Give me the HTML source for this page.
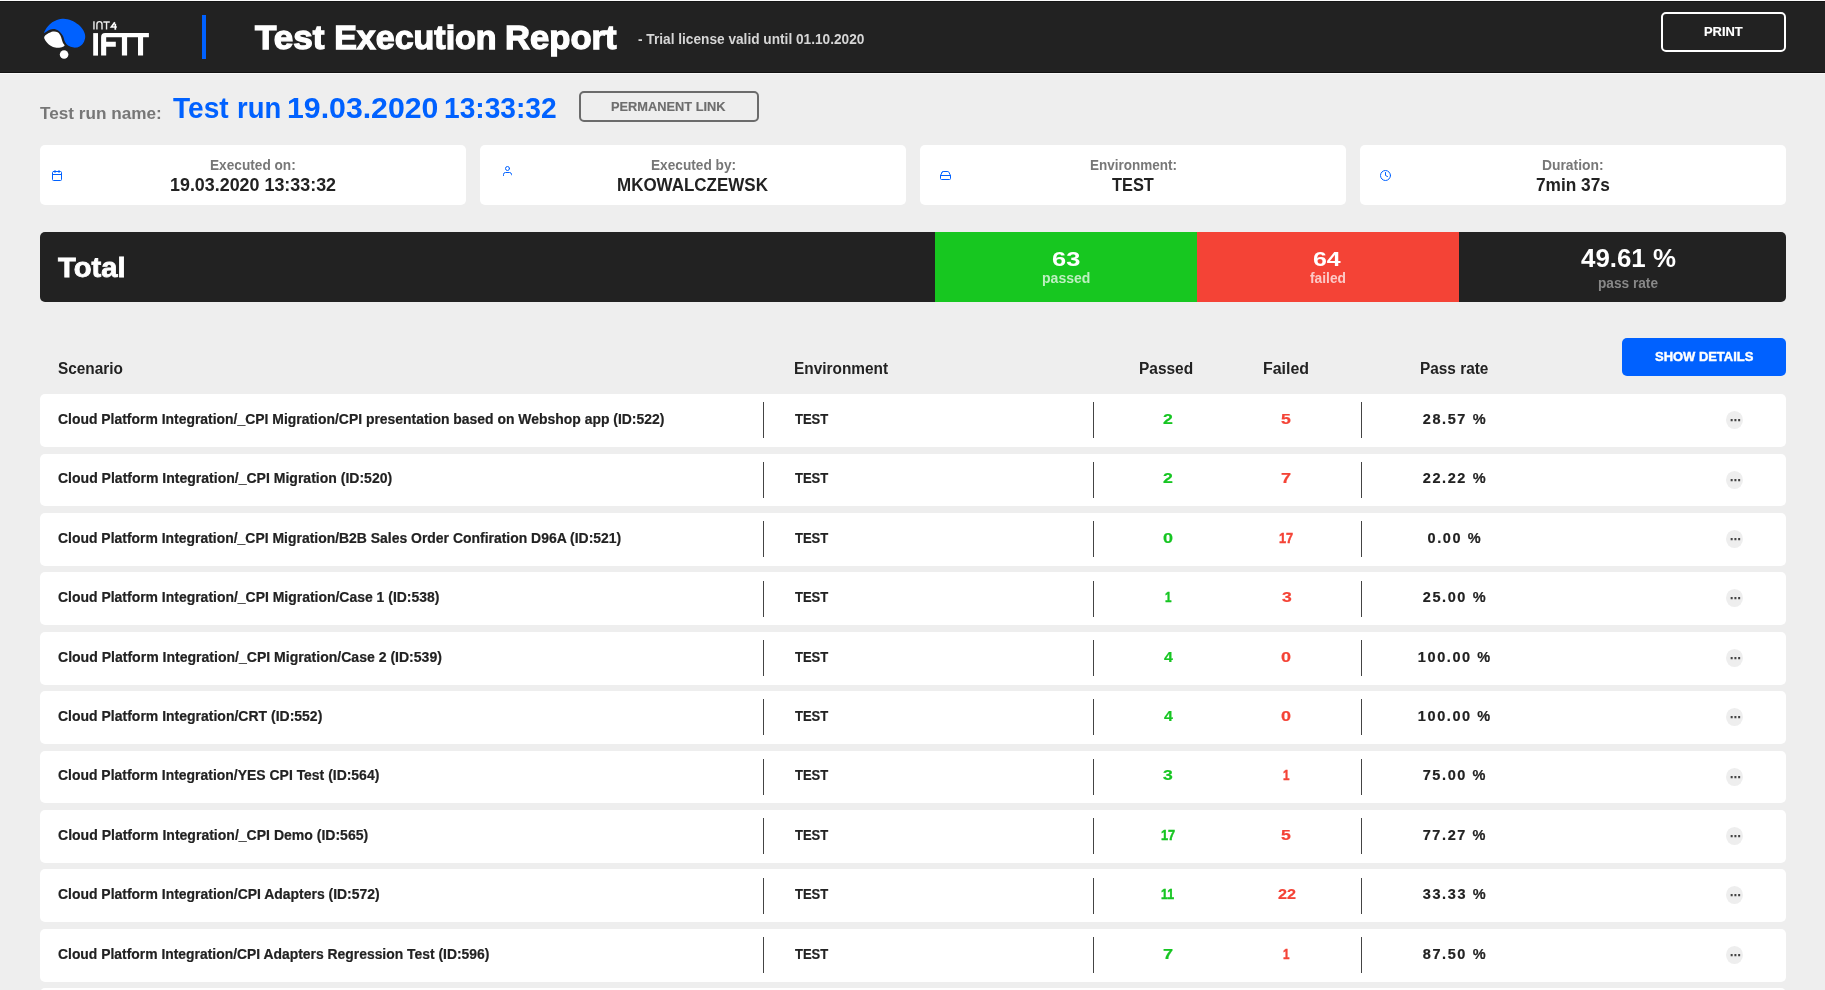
<!DOCTYPE html>
<html><head><meta charset="utf-8"><title>Test Execution Report</title>
<style>
html,body{margin:0;padding:0}
body{width:1825px;height:990px;overflow:hidden;background:#eeeeee;font-family:"Liberation Sans",sans-serif;position:relative}
.t{position:absolute;line-height:1;white-space:pre;transform-origin:0 0;display:block}
.hdr{position:absolute;left:0;top:1px;width:1825px;height:72px;background:#222222;border-top:1px solid #151515;border-bottom:1px solid #131313;box-sizing:border-box}
.bar{position:absolute;left:202px;top:15px;width:4px;height:44px;background:#0061ff}
.btn{position:absolute;box-sizing:border-box;border-radius:5px}
.card{position:absolute;top:145px;height:60px;width:426px;background:#fff;border-radius:5px}
.total{position:absolute;left:40px;top:232px;width:1746px;height:70px;background:#222222;border-radius:5px;overflow:hidden}
.row{position:absolute;left:40px;width:1746px;height:52.8px;background:#fff;border-radius:5px}
.dv{position:absolute;top:8.2px;width:1px;height:36px;background:#444}
.dots{position:absolute;left:1686px;top:17.1px;width:17.2px;height:18px;border-radius:50%;background:#eeeeee}
svg{position:absolute;overflow:visible}
.ic{fill:none;stroke:#0061ff;stroke-width:2;stroke-linecap:round;stroke-linejoin:round}
</style></head><body>
<div style="position:absolute;left:0;top:0;width:1825px;height:1px;background:#fcfcfc"></div><div class="hdr"></div><div style="position:absolute;left:0;top:73px;width:1825px;height:1px;background:#f9f9f9"></div>
<!-- logo -->
<svg style="left:30px;top:10px" width="140" height="60" viewBox="0 0 140 60">
<path d="M14.2 23.0C13.8 22.6 15.6 19.4 16.9 17.6C18.2 15.8 20.3 13.7 22.2 12.3C24.1 10.9 26.5 10.0 28.4 9.4C30.3 8.8 31.5 8.6 33.7 8.8C35.9 9.0 39.0 9.4 41.4 10.4C43.8 11.4 46.3 12.9 48.3 14.6C50.3 16.2 52.1 18.4 53.3 20.3C54.4 22.2 55.1 24.2 55.2 26.1C55.3 28.0 54.9 29.8 54.1 31.4C53.3 33.0 52.0 34.7 50.6 35.7C49.2 36.7 47.7 37.4 46.0 37.6C44.3 37.8 42.1 37.3 40.6 36.8C39.1 36.3 37.8 35.5 36.8 34.5C35.8 33.5 35.1 32.1 34.5 30.7C33.9 29.3 33.8 27.6 33.0 26.1C32.2 24.6 31.2 23.0 29.9 21.9C28.6 20.8 27.1 19.5 25.3 19.2C23.5 18.9 21.1 19.5 19.2 20.1C17.3 20.7 14.6 23.4 14.2 23.0Z" fill="#0061ff"/>
<path d="M14.2 27.2C14.4 25.9 16.1 24.8 17.6 23.8C19.1 22.9 21.3 21.8 23.0 21.5C24.7 21.2 26.4 21.6 27.6 22.2C28.8 22.8 29.6 24.1 30.3 25.3C31.0 26.5 31.4 28.2 31.8 29.5C32.2 30.8 32.5 32.0 33.0 33.0C33.5 34.0 34.9 35.0 34.5 35.7C34.1 36.4 32.2 37.1 30.7 37.4C29.2 37.7 27.1 38.0 25.3 37.6C23.5 37.2 21.4 36.3 19.9 35.3C18.4 34.3 17.1 32.8 16.1 31.4C15.2 30.0 13.9 28.5 14.2 27.2Z" fill="#fff"/>
<circle cx="34.1" cy="44.5" r="4.3" fill="#fff"/>
<g fill="#fff">
<rect x="63.2" y="23.1" width="4.8" height="22.5"/>
<path d="M71.1 45.6V27.1a4 4 0 0 1 4-4H118.9v4.2H113.1V45.6h-5.1V27.3H97.1V45.6h-5.2V27.3H76.2V31.8h9.6v4.9h-9.6V45.6z"/>
</g>
<g fill="none" stroke="#eee" stroke-width="1.4">
<path d="M63.95 11.3V19.6"/>
<path d="M66.9 19.6V14.2a2.55 2.55 0 0 1 5.1 0V19.6"/>
<path d="M73.3 12H79.8M76.55 12V19.6"/>
</g>
<path d="M84.8 12.3L81.4 17H86.8M85.3 13.8V19.7" fill="none" stroke="#fff" stroke-width="1.7"/>
</svg>
<div class="bar"></div>
<div class="btn" style="left:1661px;top:12px;width:125px;height:40px;border:2px solid #fff"></div>
<div class="btn" style="left:579px;top:91px;width:180px;height:31px;border:2px solid #6b6b6b"></div>
<div class="card" style="left:40px"></div>
<div class="card" style="left:480px"></div>
<div class="card" style="left:920px"></div>
<div class="card" style="left:1360px"></div>
<!-- icons -->
<svg class="ic" style="left:51px;top:169px" width="14" height="14" viewBox="0 0 14 14"><g transform="translate(0,0.5) scale(0.5)"><rect x="3" y="4" width="18" height="18" rx="2" ry="2"/><line x1="16" y1="2" x2="16" y2="6"/><line x1="8" y1="2" x2="8" y2="6"/><line x1="3" y1="10" x2="21" y2="10"/></g></svg>
<svg class="ic" style="left:501px;top:165px" width="14" height="14" viewBox="0 0 14 14"><g transform="translate(0.5,0) scale(0.5)"><path d="M20 19.6V19a4 4 0 0 0-4-4H8a4 4 0 0 0-4 4v2"/><circle cx="12" cy="7" r="4"/></g></svg>
<svg class="ic" style="left:939px;top:169px" width="14" height="14" viewBox="0 0 14 14"><g transform="translate(0.5,0.5) scale(0.5)"><line x1="22" y1="12" x2="2" y2="12"/><path d="M5.45 5.11L2 12v6a2 2 0 0 0 2 2h16a2 2 0 0 0 2-2v-6l-3.45-6.89A2 2 0 0 0 16.76 4H7.24a2 2 0 0 0-1.79 1.11z"/></g></svg>
<svg class="ic" style="left:1379px;top:169px" width="14" height="14" viewBox="0 0 14 14"><g transform="translate(0.5,0.5) scale(0.5)"><circle cx="12" cy="12" r="10"/><polyline points="12 6 12 12 16 14"/></g></svg>
<!-- total -->
<div class="total"><div style="position:absolute;left:895px;top:0;width:262px;height:70px;background:#17c720"></div><div style="position:absolute;left:1157px;top:0;width:262px;height:70px;background:#f44336"></div></div>
<div class="btn" style="left:1622px;top:338px;width:164px;height:38px;background:#0061ff"></div>
<div class="row" style="top:394.2px"><i class="dv" style="left:723px"></i><i class="dv" style="left:1053px"></i><i class="dv" style="left:1321px"></i><b class="dots"><svg width="18" height="18" viewBox="0 0 18 18" style="left:0;top:0"><path d="M4.65 7.9h2v2.3h-2zM8.4 7.9h2v2.3h-2zM12.15 7.9h2v2.3h-2z" fill="#444"/></svg></b></div>
<div class="row" style="top:453.6px"><i class="dv" style="left:723px"></i><i class="dv" style="left:1053px"></i><i class="dv" style="left:1321px"></i><b class="dots"><svg width="18" height="18" viewBox="0 0 18 18" style="left:0;top:0"><path d="M4.65 7.9h2v2.3h-2zM8.4 7.9h2v2.3h-2zM12.15 7.9h2v2.3h-2z" fill="#444"/></svg></b></div>
<div class="row" style="top:513.0px"><i class="dv" style="left:723px"></i><i class="dv" style="left:1053px"></i><i class="dv" style="left:1321px"></i><b class="dots"><svg width="18" height="18" viewBox="0 0 18 18" style="left:0;top:0"><path d="M4.65 7.9h2v2.3h-2zM8.4 7.9h2v2.3h-2zM12.15 7.9h2v2.3h-2z" fill="#444"/></svg></b></div>
<div class="row" style="top:572.4px"><i class="dv" style="left:723px"></i><i class="dv" style="left:1053px"></i><i class="dv" style="left:1321px"></i><b class="dots"><svg width="18" height="18" viewBox="0 0 18 18" style="left:0;top:0"><path d="M4.65 7.9h2v2.3h-2zM8.4 7.9h2v2.3h-2zM12.15 7.9h2v2.3h-2z" fill="#444"/></svg></b></div>
<div class="row" style="top:631.8px"><i class="dv" style="left:723px"></i><i class="dv" style="left:1053px"></i><i class="dv" style="left:1321px"></i><b class="dots"><svg width="18" height="18" viewBox="0 0 18 18" style="left:0;top:0"><path d="M4.65 7.9h2v2.3h-2zM8.4 7.9h2v2.3h-2zM12.15 7.9h2v2.3h-2z" fill="#444"/></svg></b></div>
<div class="row" style="top:691.2px"><i class="dv" style="left:723px"></i><i class="dv" style="left:1053px"></i><i class="dv" style="left:1321px"></i><b class="dots"><svg width="18" height="18" viewBox="0 0 18 18" style="left:0;top:0"><path d="M4.65 7.9h2v2.3h-2zM8.4 7.9h2v2.3h-2zM12.15 7.9h2v2.3h-2z" fill="#444"/></svg></b></div>
<div class="row" style="top:750.6px"><i class="dv" style="left:723px"></i><i class="dv" style="left:1053px"></i><i class="dv" style="left:1321px"></i><b class="dots"><svg width="18" height="18" viewBox="0 0 18 18" style="left:0;top:0"><path d="M4.65 7.9h2v2.3h-2zM8.4 7.9h2v2.3h-2zM12.15 7.9h2v2.3h-2z" fill="#444"/></svg></b></div>
<div class="row" style="top:810.0px"><i class="dv" style="left:723px"></i><i class="dv" style="left:1053px"></i><i class="dv" style="left:1321px"></i><b class="dots"><svg width="18" height="18" viewBox="0 0 18 18" style="left:0;top:0"><path d="M4.65 7.9h2v2.3h-2zM8.4 7.9h2v2.3h-2zM12.15 7.9h2v2.3h-2z" fill="#444"/></svg></b></div>
<div class="row" style="top:869.4px"><i class="dv" style="left:723px"></i><i class="dv" style="left:1053px"></i><i class="dv" style="left:1321px"></i><b class="dots"><svg width="18" height="18" viewBox="0 0 18 18" style="left:0;top:0"><path d="M4.65 7.9h2v2.3h-2zM8.4 7.9h2v2.3h-2zM12.15 7.9h2v2.3h-2z" fill="#444"/></svg></b></div>
<div class="row" style="top:928.8px"><i class="dv" style="left:723px"></i><i class="dv" style="left:1053px"></i><i class="dv" style="left:1321px"></i><b class="dots"><svg width="18" height="18" viewBox="0 0 18 18" style="left:0;top:0"><path d="M4.65 7.9h2v2.3h-2zM8.4 7.9h2v2.3h-2zM12.15 7.9h2v2.3h-2z" fill="#444"/></svg></b></div>
<div class="row" style="top:988.2px"><i class="dv" style="left:723px"></i><i class="dv" style="left:1053px"></i><i class="dv" style="left:1321px"></i><b class="dots"><svg width="18" height="18" viewBox="0 0 18 18" style="left:0;top:0"><path d="M4.65 7.9h2v2.3h-2zM8.4 7.9h2v2.3h-2zM12.15 7.9h2v2.3h-2z" fill="#444"/></svg></b></div>

<div id="tx" style="position:absolute;left:0;top:0;width:1825px;height:990px;will-change:transform">
<span class="t" style="left:255.18px;top:20.00px;font-size:34px;font-weight:700;color:#fff;-webkit-text-stroke:1.3px #fff;transform:scaleX(1.0320);">Test</span>
<span class="t" style="left:334.15px;top:20.00px;font-size:34px;font-weight:700;color:#fff;-webkit-text-stroke:1.3px #fff;">Execution</span>
<span class="t" style="left:505.33px;top:20.00px;font-size:34px;font-weight:700;color:#fff;-webkit-text-stroke:1.3px #fff;transform:scaleX(1.0182);">Report</span>
<span class="t" style="left:638.24px;top:32.02px;font-size:14px;font-weight:700;color:#d6d6d6;transform:scaleX(0.9764);">- Trial license valid until 01.10.2020</span>
<span class="t" style="left:1703.93px;top:26.05px;font-size:12px;font-weight:700;color:#fff;-webkit-text-stroke:0.15px #fff;transform:scaleX(1.0768);">PRINT</span>
<span class="t" style="left:40.22px;top:105.20px;font-size:16.5px;font-weight:700;color:#777;transform:scaleX(1.0398);">Test run name:</span>
<span class="t" style="left:173.43px;top:93.10px;font-size:29.5px;font-weight:700;color:#0061ff;transform:scaleX(0.9526);">Test</span>
<span class="t" style="left:236.66px;top:93.10px;font-size:29.5px;font-weight:700;color:#0061ff;transform:scaleX(0.9283);">run</span>
<span class="t" style="left:286.55px;top:93.10px;font-size:29.5px;font-weight:700;color:#0061ff;transform:scaleX(1.0255);">19.03.2020</span>
<span class="t" style="left:444.48px;top:93.10px;font-size:29.5px;font-weight:700;color:#0061ff;transform:scaleX(0.9537);">13:33:32</span>
<span class="t" style="left:611.34px;top:101.15px;font-size:12px;font-weight:700;color:#6e6e6e;-webkit-text-stroke:0.15px #6e6e6e;transform:scaleX(1.0672);">PERMANENT LINK</span>
<span class="t" style="left:210.32px;top:157.80px;font-size:14.5px;font-weight:700;color:#777;transform:scaleX(0.9419);">Executed on:</span>
<span class="t" style="left:169.64px;top:175.50px;font-size:18px;font-weight:700;color:#222;transform:scaleX(0.9934);">19.03.2020 13:33:32</span>
<span class="t" style="left:650.57px;top:157.80px;font-size:14.5px;font-weight:700;color:#777;transform:scaleX(0.9427);">Executed by:</span>
<span class="t" style="left:617.29px;top:175.50px;font-size:18px;font-weight:700;color:#222;transform:scaleX(0.9435);">MKOWALCZEWSK</span>
<span class="t" style="left:1089.68px;top:157.80px;font-size:14.5px;font-weight:700;color:#777;transform:scaleX(0.9314);">Environment:</span>
<span class="t" style="left:1112.04px;top:175.50px;font-size:18px;font-weight:700;color:#222;transform:scaleX(0.9094);">TEST</span>
<span class="t" style="left:1542.41px;top:157.80px;font-size:14.5px;font-weight:700;color:#777;transform:scaleX(0.9557);">Duration:</span>
<span class="t" style="left:1536.02px;top:175.50px;font-size:18px;font-weight:700;color:#222;transform:scaleX(0.9595);">7min 37s</span>
<span class="t" style="left:58.46px;top:254.40px;font-size:28px;font-weight:700;color:#fff;-webkit-text-stroke:0.8px #fff;transform:scaleX(1.0424);">Total</span>
<span class="t" style="left:1051.65px;top:249.40px;font-size:20px;font-weight:700;color:#fff;transform:scaleX(1.2702);">63</span>
<span class="t" style="left:1041.85px;top:270.70px;font-size:14.5px;font-weight:700;color:rgba(255,255,255,0.72);transform:scaleX(0.9682);">passed</span>
<span class="t" style="left:1313.37px;top:249.40px;font-size:20px;font-weight:700;color:#fff;transform:scaleX(1.2458);">64</span>
<span class="t" style="left:1310.00px;top:270.70px;font-size:14.5px;font-weight:700;color:rgba(255,255,255,0.72);transform:scaleX(0.9512);">failed</span>
<span class="t" style="left:1580.65px;top:245.90px;font-size:25.5px;font-weight:700;color:#fff;transform:scaleX(1.0149);">49.61 %</span>
<span class="t" style="left:1597.97px;top:276.30px;font-size:14.5px;font-weight:700;color:#888;transform:scaleX(0.9422);">pass rate</span>
<span class="t" style="left:57.51px;top:361.10px;font-size:16px;font-weight:700;color:#222;transform:scaleX(0.9608);">Scenario</span>
<span class="t" style="left:794.12px;top:361.10px;font-size:16px;font-weight:700;color:#222;transform:scaleX(0.9618);">Environment</span>
<span class="t" style="left:1139.32px;top:361.10px;font-size:16px;font-weight:700;color:#222;transform:scaleX(0.9662);">Passed</span>
<span class="t" style="left:1263.49px;top:361.10px;font-size:16px;font-weight:700;color:#222;transform:scaleX(0.9953);">Failed</span>
<span class="t" style="left:1419.62px;top:361.10px;font-size:16px;font-weight:700;color:#222;transform:scaleX(0.9609);">Pass rate</span>
<span class="t" style="left:1655.09px;top:351.15px;font-size:12px;font-weight:700;color:#fff;-webkit-text-stroke:0.4px #fff;transform:scaleX(1.0791);">SHOW DETAILS</span>
<span class="t" style="left:57.76px;top:412.00px;font-size:14.5px;font-weight:700;color:#222;-webkit-text-stroke:0.2px #222;transform:scaleX(0.9604);">Cloud Platform Integration/_CPI Migration/CPI presentation based on Webshop app (ID:522)</span>
<span class="t" style="left:794.81px;top:412.00px;font-size:14.5px;font-weight:700;color:#222;-webkit-text-stroke:0.2px #222;transform:scaleX(0.8971);">TEST</span>
<span class="t" style="left:1163.26px;top:412.00px;font-size:14.5px;font-weight:700;color:#16c522;-webkit-text-stroke:0.2px #16c522;transform:scaleX(1.2209);">2</span>
<span class="t" style="left:1281.46px;top:412.00px;font-size:14.5px;font-weight:700;color:#f44336;-webkit-text-stroke:0.2px #f44336;transform:scaleX(1.2182);">5</span>
<span class="t" style="left:1422.75px;top:412.00px;font-size:14.5px;font-weight:700;color:#222;letter-spacing:1.6px;-webkit-text-stroke:0.2px #222;">28.57 %</span>
<span class="t" style="left:57.76px;top:471.40px;font-size:14.5px;font-weight:700;color:#222;-webkit-text-stroke:0.2px #222;transform:scaleX(0.9669);">Cloud Platform Integration/_CPI Migration (ID:520)</span>
<span class="t" style="left:794.81px;top:471.40px;font-size:14.5px;font-weight:700;color:#222;-webkit-text-stroke:0.2px #222;transform:scaleX(0.8971);">TEST</span>
<span class="t" style="left:1163.26px;top:471.40px;font-size:14.5px;font-weight:700;color:#16c522;-webkit-text-stroke:0.2px #16c522;transform:scaleX(1.2209);">2</span>
<span class="t" style="left:1281.40px;top:471.40px;font-size:14.5px;font-weight:700;color:#f44336;-webkit-text-stroke:0.2px #f44336;transform:scaleX(1.2529);">7</span>
<span class="t" style="left:1422.75px;top:471.40px;font-size:14.5px;font-weight:700;color:#222;letter-spacing:1.6px;-webkit-text-stroke:0.2px #222;">22.22 %</span>
<span class="t" style="left:57.76px;top:530.80px;font-size:14.5px;font-weight:700;color:#222;-webkit-text-stroke:0.2px #222;transform:scaleX(0.9611);">Cloud Platform Integration/_CPI Migration/B2B Sales Order Confiration D96A (ID:521)</span>
<span class="t" style="left:794.81px;top:530.80px;font-size:14.5px;font-weight:700;color:#222;-webkit-text-stroke:0.2px #222;transform:scaleX(0.8971);">TEST</span>
<span class="t" style="left:1163.15px;top:530.80px;font-size:14.5px;font-weight:700;color:#16c522;-webkit-text-stroke:0.2px #16c522;transform:scaleX(1.2412);">0</span>
<span class="t" style="left:1279.29px;top:530.80px;font-size:14.5px;font-weight:700;color:#f44336;-webkit-text-stroke:0.45px #f44336;transform:scaleX(0.8823);">17</span>
<span class="t" style="left:1427.48px;top:530.80px;font-size:14.5px;font-weight:700;color:#222;letter-spacing:1.6px;-webkit-text-stroke:0.2px #222;">0.00 %</span>
<span class="t" style="left:57.76px;top:590.20px;font-size:14.5px;font-weight:700;color:#222;-webkit-text-stroke:0.2px #222;transform:scaleX(0.9622);">Cloud Platform Integration/_CPI Migration/Case 1 (ID:538)</span>
<span class="t" style="left:794.81px;top:590.20px;font-size:14.5px;font-weight:700;color:#222;-webkit-text-stroke:0.2px #222;transform:scaleX(0.8971);">TEST</span>
<span class="t" style="left:1164.79px;top:590.20px;font-size:14.5px;font-weight:700;color:#16c522;-webkit-text-stroke:0.45px #16c522;transform:scaleX(0.8042);">1</span>
<span class="t" style="left:1281.63px;top:590.20px;font-size:14.5px;font-weight:700;color:#f44336;-webkit-text-stroke:0.2px #f44336;transform:scaleX(1.2130);">3</span>
<span class="t" style="left:1422.75px;top:590.20px;font-size:14.5px;font-weight:700;color:#222;letter-spacing:1.6px;-webkit-text-stroke:0.2px #222;">25.00 %</span>
<span class="t" style="left:57.76px;top:649.60px;font-size:14.5px;font-weight:700;color:#222;-webkit-text-stroke:0.2px #222;transform:scaleX(0.9685);">Cloud Platform Integration/_CPI Migration/Case 2 (ID:539)</span>
<span class="t" style="left:794.81px;top:649.60px;font-size:14.5px;font-weight:700;color:#222;-webkit-text-stroke:0.2px #222;transform:scaleX(0.8971);">TEST</span>
<span class="t" style="left:1163.54px;top:649.60px;font-size:14.5px;font-weight:700;color:#16c522;-webkit-text-stroke:0.2px #16c522;transform:scaleX(1.1000);">4</span>
<span class="t" style="left:1281.45px;top:649.60px;font-size:14.5px;font-weight:700;color:#f44336;-webkit-text-stroke:0.2px #f44336;transform:scaleX(1.2412);">0</span>
<span class="t" style="left:1417.81px;top:649.60px;font-size:14.5px;font-weight:700;color:#222;letter-spacing:1.6px;-webkit-text-stroke:0.2px #222;">100.00 %</span>
<span class="t" style="left:57.76px;top:709.00px;font-size:14.5px;font-weight:700;color:#222;-webkit-text-stroke:0.2px #222;transform:scaleX(0.9650);">Cloud Platform Integration/CRT (ID:552)</span>
<span class="t" style="left:794.81px;top:709.00px;font-size:14.5px;font-weight:700;color:#222;-webkit-text-stroke:0.2px #222;transform:scaleX(0.8971);">TEST</span>
<span class="t" style="left:1163.54px;top:709.00px;font-size:14.5px;font-weight:700;color:#16c522;-webkit-text-stroke:0.2px #16c522;transform:scaleX(1.1000);">4</span>
<span class="t" style="left:1281.45px;top:709.00px;font-size:14.5px;font-weight:700;color:#f44336;-webkit-text-stroke:0.2px #f44336;transform:scaleX(1.2412);">0</span>
<span class="t" style="left:1417.81px;top:709.00px;font-size:14.5px;font-weight:700;color:#222;letter-spacing:1.6px;-webkit-text-stroke:0.2px #222;">100.00 %</span>
<span class="t" style="left:57.76px;top:768.40px;font-size:14.5px;font-weight:700;color:#222;-webkit-text-stroke:0.2px #222;transform:scaleX(0.9617);">Cloud Platform Integration/YES CPI Test (ID:564)</span>
<span class="t" style="left:794.81px;top:768.40px;font-size:14.5px;font-weight:700;color:#222;-webkit-text-stroke:0.2px #222;transform:scaleX(0.8971);">TEST</span>
<span class="t" style="left:1163.33px;top:768.40px;font-size:14.5px;font-weight:700;color:#16c522;-webkit-text-stroke:0.2px #16c522;transform:scaleX(1.2130);">3</span>
<span class="t" style="left:1283.09px;top:768.40px;font-size:14.5px;font-weight:700;color:#f44336;-webkit-text-stroke:0.45px #f44336;transform:scaleX(0.8042);">1</span>
<span class="t" style="left:1422.69px;top:768.40px;font-size:14.5px;font-weight:700;color:#222;letter-spacing:1.6px;-webkit-text-stroke:0.2px #222;">75.00 %</span>
<span class="t" style="left:57.76px;top:827.80px;font-size:14.5px;font-weight:700;color:#222;-webkit-text-stroke:0.2px #222;transform:scaleX(0.9674);">Cloud Platform Integration/_CPI Demo (ID:565)</span>
<span class="t" style="left:794.81px;top:827.80px;font-size:14.5px;font-weight:700;color:#222;-webkit-text-stroke:0.2px #222;transform:scaleX(0.8971);">TEST</span>
<span class="t" style="left:1160.99px;top:827.80px;font-size:14.5px;font-weight:700;color:#16c522;-webkit-text-stroke:0.45px #16c522;transform:scaleX(0.8823);">17</span>
<span class="t" style="left:1281.46px;top:827.80px;font-size:14.5px;font-weight:700;color:#f44336;-webkit-text-stroke:0.2px #f44336;transform:scaleX(1.2182);">5</span>
<span class="t" style="left:1422.69px;top:827.80px;font-size:14.5px;font-weight:700;color:#222;letter-spacing:1.6px;-webkit-text-stroke:0.2px #222;">77.27 %</span>
<span class="t" style="left:57.76px;top:887.20px;font-size:14.5px;font-weight:700;color:#222;-webkit-text-stroke:0.2px #222;transform:scaleX(0.9613);">Cloud Platform Integration/CPI Adapters (ID:572)</span>
<span class="t" style="left:794.81px;top:887.20px;font-size:14.5px;font-weight:700;color:#222;-webkit-text-stroke:0.2px #222;transform:scaleX(0.8971);">TEST</span>
<span class="t" style="left:1161.41px;top:887.20px;font-size:14.5px;font-weight:700;color:#16c522;-webkit-text-stroke:0.45px #16c522;transform:scaleX(0.8518);">11</span>
<span class="t" style="left:1277.50px;top:887.20px;font-size:14.5px;font-weight:700;color:#f44336;-webkit-text-stroke:0.2px #f44336;transform:scaleX(1.1178);">22</span>
<span class="t" style="left:1422.78px;top:887.20px;font-size:14.5px;font-weight:700;color:#222;letter-spacing:1.6px;-webkit-text-stroke:0.2px #222;">33.33 %</span>
<span class="t" style="left:57.76px;top:946.60px;font-size:14.5px;font-weight:700;color:#222;-webkit-text-stroke:0.2px #222;transform:scaleX(0.9578);">Cloud Platform Integration/CPI Adapters Regression Test (ID:596)</span>
<span class="t" style="left:794.81px;top:946.60px;font-size:14.5px;font-weight:700;color:#222;-webkit-text-stroke:0.2px #222;transform:scaleX(0.8971);">TEST</span>
<span class="t" style="left:1163.10px;top:946.60px;font-size:14.5px;font-weight:700;color:#16c522;-webkit-text-stroke:0.2px #16c522;transform:scaleX(1.2529);">7</span>
<span class="t" style="left:1283.09px;top:946.60px;font-size:14.5px;font-weight:700;color:#f44336;-webkit-text-stroke:0.45px #f44336;transform:scaleX(0.8042);">1</span>
<span class="t" style="left:1422.75px;top:946.60px;font-size:14.5px;font-weight:700;color:#222;letter-spacing:1.6px;-webkit-text-stroke:0.2px #222;">87.50 %</span>
</div>
</body></html>
